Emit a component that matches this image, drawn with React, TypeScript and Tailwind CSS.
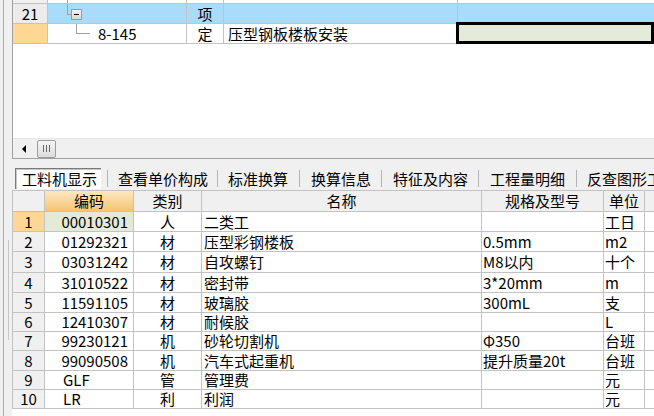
const rows = [
  { n: "1", code: "00010301", kind: "人", name: "二类工", spec: "", unit: "工日", h: "h-[20px]" },
  { n: "2", code: "01292321", kind: "材", name: "压型彩钢楼板", spec: "0.5mm", unit: "m2", h: "h-[20px]" },
  { n: "3", code: "03031242", kind: "材", name: "自攻螺钉", spec: "M8以内", unit: "十个", h: "h-[21px]" },
  { n: "4", code: "31010522", kind: "材", name: "密封带", spec: "3*20mm", unit: "m", h: "h-[20px]" },
  { n: "5", code: "11591105", kind: "材", name: "玻璃胶", spec: "300mL", unit: "支", h: "h-[20px]" },
  { n: "6", code: "12410307", kind: "材", name: "耐候胶", spec: "", unit: "L", h: "h-[19px]" },
  { n: "7", code: "99230121", kind: "机", name: "砂轮切割机", spec: "Φ350", unit: "台班", h: "h-[19px]" },
  { n: "8", code: "99090508", kind: "机", name: "汽车式起重机", spec: "提升质量20t", unit: "台班", h: "h-[20px]" },
  { n: "9", code: "GLF", kind: "管", name: "管理费", spec: "", unit: "元", h: "h-[19px]" },
  { n: "10", code: "LR", kind: "利", name: "利润", spec: "", unit: "元", h: "h-[19px]" },
];

const tabs = [
  { label: "查看单价构成", w: "w-[99px]", pad: "w-[10px]" },
  { label: "标准换算", w: "w-[71px]", pad: "w-[10px]" },
  { label: "换算信息", w: "w-[70px]", pad: "w-[11px]" },
  { label: "特征及内容", w: "w-[85px]", pad: "w-[11px]" },
  { label: "工程量明细", w: "w-[86px]", pad: "w-[11px]" },
  { label: "反查图形工程量", w: "w-[80px]", pad: "w-[10px]" },
];

const line = "border-[#c3c3c3]";

function TopGrid() {
  return (
    <div className="flex flex-col">
      {/* partial row above */}
      <div className={`flex h-[4px] border-b ${line}`}>
        <div className={`w-[35px] shrink-0 border-r ${line} bg-[#f0f0f0]`} />
        <div className={`relative w-[139px] shrink-0 border-r ${line}`}>
          <div className="absolute left-[19px] top-0 h-full w-px bg-[#a0a0a0]" />
        </div>
        <div className={`w-[37px] shrink-0 border-r ${line}`} />
        <div className={`w-[234px] shrink-0 border-r ${line}`} />
        <div className="flex-1" />
      </div>
      {/* row 21 */}
      <div className={`flex h-[20px] border-b ${line} bg-[#a9dbfa] leading-[19px]`}>
        <div className={`w-[35px] shrink-0 border-r ${line} bg-[#ececec] text-center`}>21</div>
        <div className={`relative w-[139px] shrink-0 border-r ${line}`}>
          <div className="absolute left-[19px] top-0 h-[10px] w-px bg-[#a0a0a0]" />
          <div className="absolute left-[19px] top-[10px] h-px w-[4px] bg-[#a0a0a0]" />
          <div className="absolute left-[23px] top-[5px] flex h-[11px] w-[11px] items-center justify-center border border-[#9a9a9a] bg-gradient-to-b from-[#f4f4f4] to-[#d8d8d8]">
            <div className="h-px w-[5px] bg-black" />
          </div>
        </div>
        <div className={`w-[37px] shrink-0 border-r ${line} text-center`}>项</div>
        <div className={`w-[234px] shrink-0 border-r ${line}`} />
        <div className="flex-1" />
      </div>
      {/* row 8-145 */}
      <div className={`flex h-[20px] border-b ${line} bg-white leading-[19px]`}>
        <div className={`w-[35px] shrink-0 border-r ${line} bg-[#fed795]`} />
        <div className={`relative w-[139px] shrink-0 border-r ${line}`}>
          <div className="absolute left-[28px] top-0 h-[10px] w-px bg-[#a0a0a0]" />
          <div className="absolute left-[28px] top-[9px] h-px w-[14px] bg-[#a0a0a0]" />
          <span className="absolute left-[50px] top-0">8-145</span>
        </div>
        <div className={`w-[37px] shrink-0 border-r ${line} text-center`}>定</div>
        <div className={`w-[234px] shrink-0 border-r ${line} pl-[4px]`}>压型钢板楼板安装</div>
        <div className="relative flex-1">
          <div className="absolute -left-[2px] -top-[2px] -bottom-[1px] right-0 border-[3px] border-black bg-[#e4ebd9]" />
        </div>
      </div>
    </div>
  );
}

function ScrollBar() {
  return (
    <div className="flex h-[20px] items-center border-t border-[#e6e6e6] bg-[#f0f0f0]">
      <div className="ml-[9px] h-0 w-0 border-y-[4px] border-r-[4px] border-y-transparent border-r-black" />
      <div className="ml-[11px] flex h-[18px] w-[19px] items-center justify-center gap-[2px] rounded-[2px] border border-[#9c9c9c] bg-gradient-to-b from-[#f6f6f6] to-[#dcdcdc]">
        <div className="h-[7px] w-px bg-[#6a6a6a]" />
        <div className="h-[7px] w-px bg-[#6a6a6a]" />
        <div className="h-[7px] w-px bg-[#6a6a6a]" />
      </div>
    </div>
  );
}

function Tabs() {
  return (
    <div className="flex h-[21px] items-center whitespace-nowrap">
      <div className="ml-[3px] flex h-[21px] w-[86px] shrink-0 items-center border-t border-l border-[#7a7a7a] border-r-white border-b-white bg-white pl-[6px] shadow-[inset_1px_1px_0_#c8c8c8]">
        工料机显示
      </div>
      <div className="w-[6px] shrink-0" />
      {tabs.map((t) => (
        <div key={t.label} className="flex shrink-0 items-center">
          <div className="h-[17px] w-px bg-[#b4b4b4]" />
          <div className={`${t.pad} shrink-0`} />
          <div className={`${t.w} shrink-0 overflow-hidden`}>{t.label}</div>
        </div>
      ))}
    </div>
  );
}

function BottomTable() {
  const c = `border-r ${line}`;
  return (
    <div className={`flex flex-col border-t border-l ${line} bg-white`}>
      <div className={`flex h-[21px] border-b ${line} leading-[20px]`}>
        <div className={`w-[32px] shrink-0 ${c} bg-[#f0f0f0]`} />
        <div className={`w-[89px] shrink-0 ${c} bg-gradient-to-b from-[#fde8c1] to-[#f5c472] text-center`}>编码</div>
        <div className={`w-[68px] shrink-0 ${c} bg-[#f0f0f0] text-center`}>类别</div>
        <div className={`w-[280px] shrink-0 ${c} bg-[#f0f0f0] text-center`}>名称</div>
        <div className={`w-[122px] shrink-0 ${c} bg-[#f0f0f0] text-center`}>规格及型号</div>
        <div className={`w-[41px] shrink-0 ${c} bg-[#f0f0f0] text-center`}>单位</div>
        <div className="flex-1 bg-[#f0f0f0]" />
      </div>
      {rows.map((r, i) => (
        <div key={r.n} className={`flex ${r.h} items-center border-b ${line} whitespace-nowrap`}>
          <div className={`flex h-full w-[32px] shrink-0 items-center justify-center ${c} ${i === 0 ? "bg-[#fed795]" : "bg-[#f0f0f0]"}`}>
            {r.n}
          </div>
          <div
            className={`flex h-full w-[89px] shrink-0 items-center ${c} ${
              i === 0 ? "bg-[#e3ebd8]" : ""
            } ${/^\d+$/.test(r.code) ? "justify-end pr-[5px]" : "pl-[18px]"}`}
          >
            {r.code}
          </div>
          <div className={`flex h-full w-[68px] shrink-0 items-center justify-center ${c}`}>{r.kind}</div>
          <div className={`flex h-full w-[280px] shrink-0 items-center pl-[2px] ${c}`}>{r.name}</div>
          <div className={`flex h-full w-[122px] shrink-0 items-center pl-[1px] ${c}`}>{r.spec}</div>
          <div className={`flex h-full w-[41px] shrink-0 items-center pl-[1px] ${c}`}>{r.unit}</div>
          <div className="h-full flex-1" />
        </div>
      ))}
    </div>
  );
}

export default function App() {
  return (
    <div className="flex h-[416px] w-[654px] overflow-hidden bg-[#f0f0f0] font-['Noto_Sans_CJK_SC',sans-serif] text-[15px] leading-[20px] text-black">
      {/* left frame edge */}
      <div className="flex w-[12px] shrink-0">
        <div className="ml-[3px] h-full w-px bg-[#a8a8a8]" />
        <div className="mt-[240px] ml-[4px] h-[100px] w-px bg-[#c8c8c8]" />
      </div>

      <div className="flex min-w-0 flex-1 flex-col">
        <div className="flex h-[159px] flex-col border-b border-l border-[#a0a0a0] bg-white">
          <TopGrid />
          <div className="flex-1" />
          <ScrollBar />
        </div>
        <div className="h-[9px]" />
        <Tabs />
        <div className="h-[1px]" />
        <BottomTable />
        <div className="flex-1 bg-white" />
      </div>
    </div>
  );
}
